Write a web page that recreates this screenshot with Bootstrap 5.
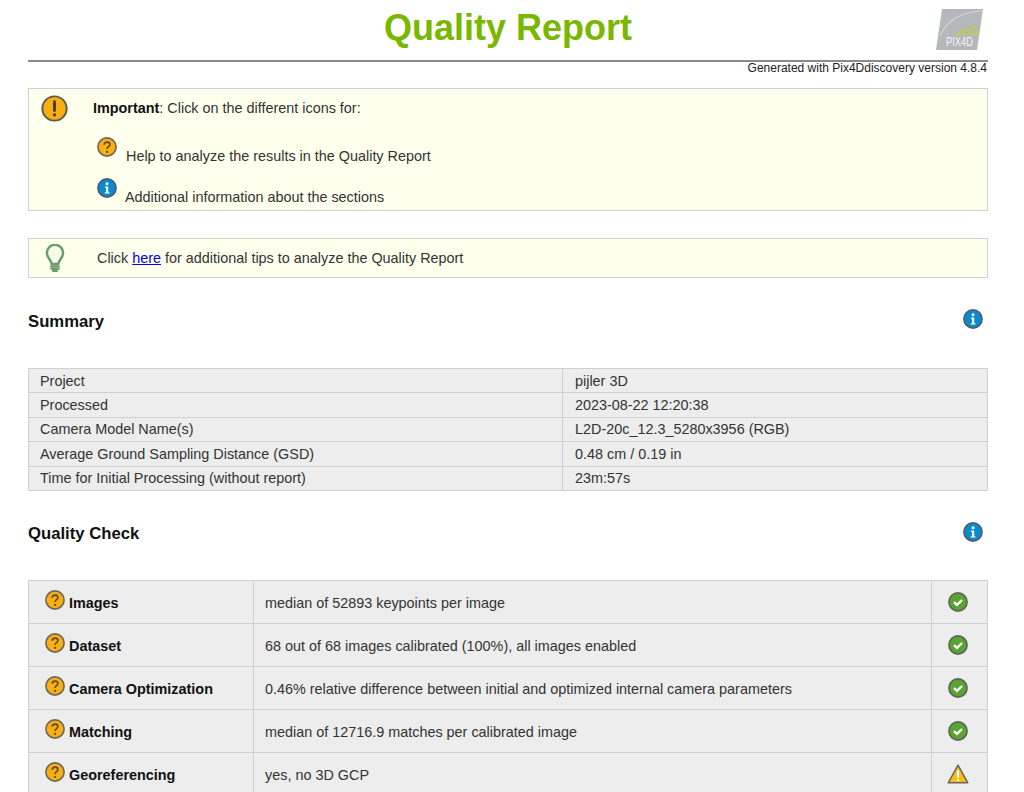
<!DOCTYPE html>
<html lang="en">
<head>
  <meta charset="UTF-8">
  <title>Quality Report</title>
  <meta name="viewport" content="width=device-width, initial-scale=1">
  <link href="https://cdn.jsdelivr.net/npm/bootstrap@5.3.2/dist/css/bootstrap.min.css" rel="stylesheet">
  <script src="https://cdn.jsdelivr.net/npm/bootstrap@5.3.2/dist/js/bootstrap.bundle.min.js"></script>

  <style>
    html, body {
      height: 792px;
      overflow: hidden;
    }

    body {
      background: #fff;
      color: #333;
      font-family: "Liberation Sans", Arial, sans-serif;
      font-size: 14.4px;
      line-height: 16px;
    }

    .report {
      width: 960px;
      margin-left: 28px;
    }

    .report-head {
      height: 62px;
      border-bottom: 2px solid #8a8a8a;
    }

    .report-head h1 {
      margin: 0;
      font-size: 36px;
      line-height: 55px;
      font-weight: 700;
      color: #7ab800;
      text-align: center;
    }

    .logo {
      position: absolute;
      top: 9px;
      left: 908px;
    }

    .generated {
      margin-top: -1px;
      padding-right: 1px;
      font-size: 12px;
      line-height: 14px;
      color: #222;
      text-align: right;
    }

    .note {
      background: #ffffee;
      border: 1px solid #d0d0d0;
    }

    .note a {
      color: #0000ee;
    }

    .note b {
      color: #111;
    }

    .note-main {
      height: 123px;
      margin-top: 13px;
    }

    .note-icon {
      margin: 6px 25px 0 12px;
    }

    .note-lead {
      margin-top: 11px;
    }

    .note-line {
      margin-left: 4px;
    }

    .note-line span {
      margin: 11px 0 0 9px;
    }

    .line-help {
      margin-top: 21px;
    }

    .line-info {
      margin-top: 14px;
    }

    .line-info span {
      margin-left: 8px;
    }

    .note-tip {
      height: 40px;
      margin-top: 27px;
    }

    .note-tip svg {
      margin: 0 32px 0 16px;
    }

    .section-title {
      height: 89px;
      padding: 31px 5px 0 0;
    }

    .section-title h2 {
      margin: 2px 0 0;
      font-size: 16.7px;
      line-height: 20px;
      font-weight: 700;
      color: #111;
    }

    .summary-title {
      height: 90px;
    }

    .summary-title h2 {
      margin-top: 3px;
    }

    .report-table {
      width: 960px;
      table-layout: fixed;
      border-collapse: collapse;
      background: #ededed;
    }

    .report-table td {
      border: 1px solid #d0d0d0;
      padding: 0 11px;
      color: #333;
      white-space: nowrap;
    }

    .summary td {
      height: 24.4px;
    }

    .summary td + td {
      padding-left: 12px;
    }

    .check td {
      height: 43px;
      padding-top: 2px;
    }

    .check b {
      color: #111;
    }

    .check .name {
      padding: 2px 0 0 16px;
    }

    .check .name svg {
      margin: -8px 4px 0 0;
      vertical-align: middle;
    }

    .check .status {
      padding: 0 3px 0 0;
      text-align: center;
    }
  </style>
</head>

<body>
  <svg width="0" height="0" class="d-block">
    <defs>
      <symbol id="ico-help" viewBox="0 0 20 20">
        <circle cx="10" cy="10" r="9.100" fill="#f9ae14" stroke="#6d675a" stroke-width="1.600"/>
        <path d="M7.200 7.800c0-1.700 1.300-2.700 2.900-2.700s2.800 1 2.800 2.400c0 2.200-2.800 2.200-2.800 4.400" fill="none" stroke="#5a4a20" stroke-width="1.600"/>
        <circle cx="10.100" cy="14.800" r="1.100" fill="#5a4a20"/>
      </symbol>
      <symbol id="ico-info" viewBox="0 0 20 20">
        <circle cx="10" cy="10" r="9.100" fill="#0a8ad2" stroke="#4d5f6a" stroke-width="1.600"/>
        <circle cx="10" cy="5.800" r="1.500" fill="#fff"/>
        <path d="M8 8.600h3.200v5.600h1.200v1.400H7.800v-1.400h1.200V10H8z" fill="#fff"/>
      </symbol>
      <symbol id="ico-ok" viewBox="0 0 20 20">
        <circle cx="10" cy="10" r="9.100" fill="#5ba332" stroke="#5c6657" stroke-width="1.600"/>
        <path d="M6 10.200l3 2.600 5-4.800" fill="none" stroke="#fff" stroke-width="2.400"/>
      </symbol>
      <symbol id="ico-warn" viewBox="0 0 22 20">
        <path d="M11 1.200L1.200 18.800h19.600z" fill="#f6bd16" stroke="#6d675a" stroke-width="1.500" stroke-linejoin="round"/>
        <path d="M11 6.500v7" stroke="#fff" stroke-width="2.200"/>
        <circle cx="11" cy="16" r="1.200" fill="#fff"/>
      </symbol>
    </defs>
  </svg>

  <div class="report position-relative">
    <div class="report-head">
      <h1>Quality Report</h1>
    </div>
    <svg class="logo" width="47" height="41" viewBox="0 0 47 41">
      <path d="M6 0H47L41 41H0z" fill="#b4b8ba"/>
      <path d="M4 27C10 12 25 3 46 2" fill="none" stroke="#d4d7d8" stroke-width="1.200"/>
      <path d="M21 25l7-6 3 3 8-5 2 8z" fill="none" stroke="#c5d03a" stroke-width="1.400"/>
      <text x="10" y="37" font-family="Liberation Sans, sans-serif" font-size="13" fill="#f4f4f4" textLength="27" lengthAdjust="spacingAndGlyphs">PIX4D</text>
    </svg>
    <div class="generated">Generated with Pix4Ddiscovery version 4.8.4</div>

    <div class="note note-main d-flex">
      <svg class="note-icon flex-shrink-0" width="27" height="27" viewBox="0 0 28 28">
        <circle cx="14" cy="14" r="12.600" fill="#f9ae14" stroke="#5f5a4c" stroke-width="2"/>
        <path d="M14 7v9" stroke="#4b3b14" stroke-width="3" stroke-linecap="round"/>
        <circle cx="14" cy="20.500" r="1.700" fill="#4b3b14"/>
      </svg>
      <div>
        <div class="note-lead"><b>Important</b>: Click on the different icons for:</div>
        <div class="note-line line-help d-flex align-items-start">
          <svg width="20" height="20" class="flex-shrink-0"><use href="#ico-help"/></svg>
          <span>Help to analyze the results in the Quality Report</span>
        </div>
        <div class="note-line line-info d-flex align-items-start">
          <svg width="20" height="20" class="flex-shrink-0"><use href="#ico-info"/></svg>
          <span>Additional information about the sections</span>
        </div>
      </div>
    </div>

    <div class="note note-tip d-flex align-items-center">
      <svg width="20" height="28" viewBox="0 0 20 30">
        <path d="M6.500 21.500C6 17 1.300 15 1.300 9.500a8.700 8.700 0 0 1 17.400 0C18.700 15 14 17 13.500 21.500z" fill="#f5fbe8" stroke="#6c9a6c" stroke-width="2.600"/>
        <path d="M5 24h10M5 26.500h10M7 28.800h6" stroke="#6c9a6c" stroke-width="2.200"/>
      </svg>
      <span>Click <a href="#">here</a> for additional tips to analyze the Quality Report</span>
    </div>

    <div class="section-title summary-title d-flex justify-content-between">
      <h2>Summary</h2>
      <svg width="20" height="20"><use href="#ico-info"/></svg>
    </div>
    <table class="report-table summary">
      <colgroup><col style="width:534px"><col></colgroup>
      <tr><td>Project</td><td>pijler 3D</td></tr>
      <tr><td>Processed</td><td>2023-08-22 12:20:38</td></tr>
      <tr><td>Camera Model Name(s)</td><td>L2D-20c_12.3_5280x3956 (RGB)</td></tr>
      <tr><td>Average Ground Sampling Distance (GSD)</td><td>0.48 cm / 0.19 in</td></tr>
      <tr><td>Time for Initial Processing (without report)</td><td>23m:57s</td></tr>
    </table>

    <div class="section-title d-flex justify-content-between">
      <h2>Quality Check</h2>
      <svg width="20" height="20"><use href="#ico-info"/></svg>
    </div>
    <table class="report-table check">
      <colgroup><col style="width:225px"><col><col style="width:56px"></colgroup>
      <tr><td class="name"><svg width="20" height="20"><use href="#ico-help"/></svg><b>Images</b></td><td>median of 52893 keypoints per image</td><td class="status"><svg width="20" height="20"><use href="#ico-ok"/></svg></td></tr>
      <tr><td class="name"><svg width="20" height="20"><use href="#ico-help"/></svg><b>Dataset</b></td><td>68 out of 68 images calibrated (100%), all images enabled</td><td class="status"><svg width="20" height="20"><use href="#ico-ok"/></svg></td></tr>
      <tr><td class="name"><svg width="20" height="20"><use href="#ico-help"/></svg><b>Camera Optimization</b></td><td>0.46% relative difference between initial and optimized internal camera parameters</td><td class="status"><svg width="20" height="20"><use href="#ico-ok"/></svg></td></tr>
      <tr><td class="name"><svg width="20" height="20"><use href="#ico-help"/></svg><b>Matching</b></td><td>median of 12716.9 matches per calibrated image</td><td class="status"><svg width="20" height="20"><use href="#ico-ok"/></svg></td></tr>
      <tr><td class="name"><svg width="20" height="20"><use href="#ico-help"/></svg><b>Georeferencing</b></td><td>yes, no 3D GCP</td><td class="status"><svg width="22" height="20"><use href="#ico-warn"/></svg></td></tr>
    </table>
  </div>
</body>
</html>
